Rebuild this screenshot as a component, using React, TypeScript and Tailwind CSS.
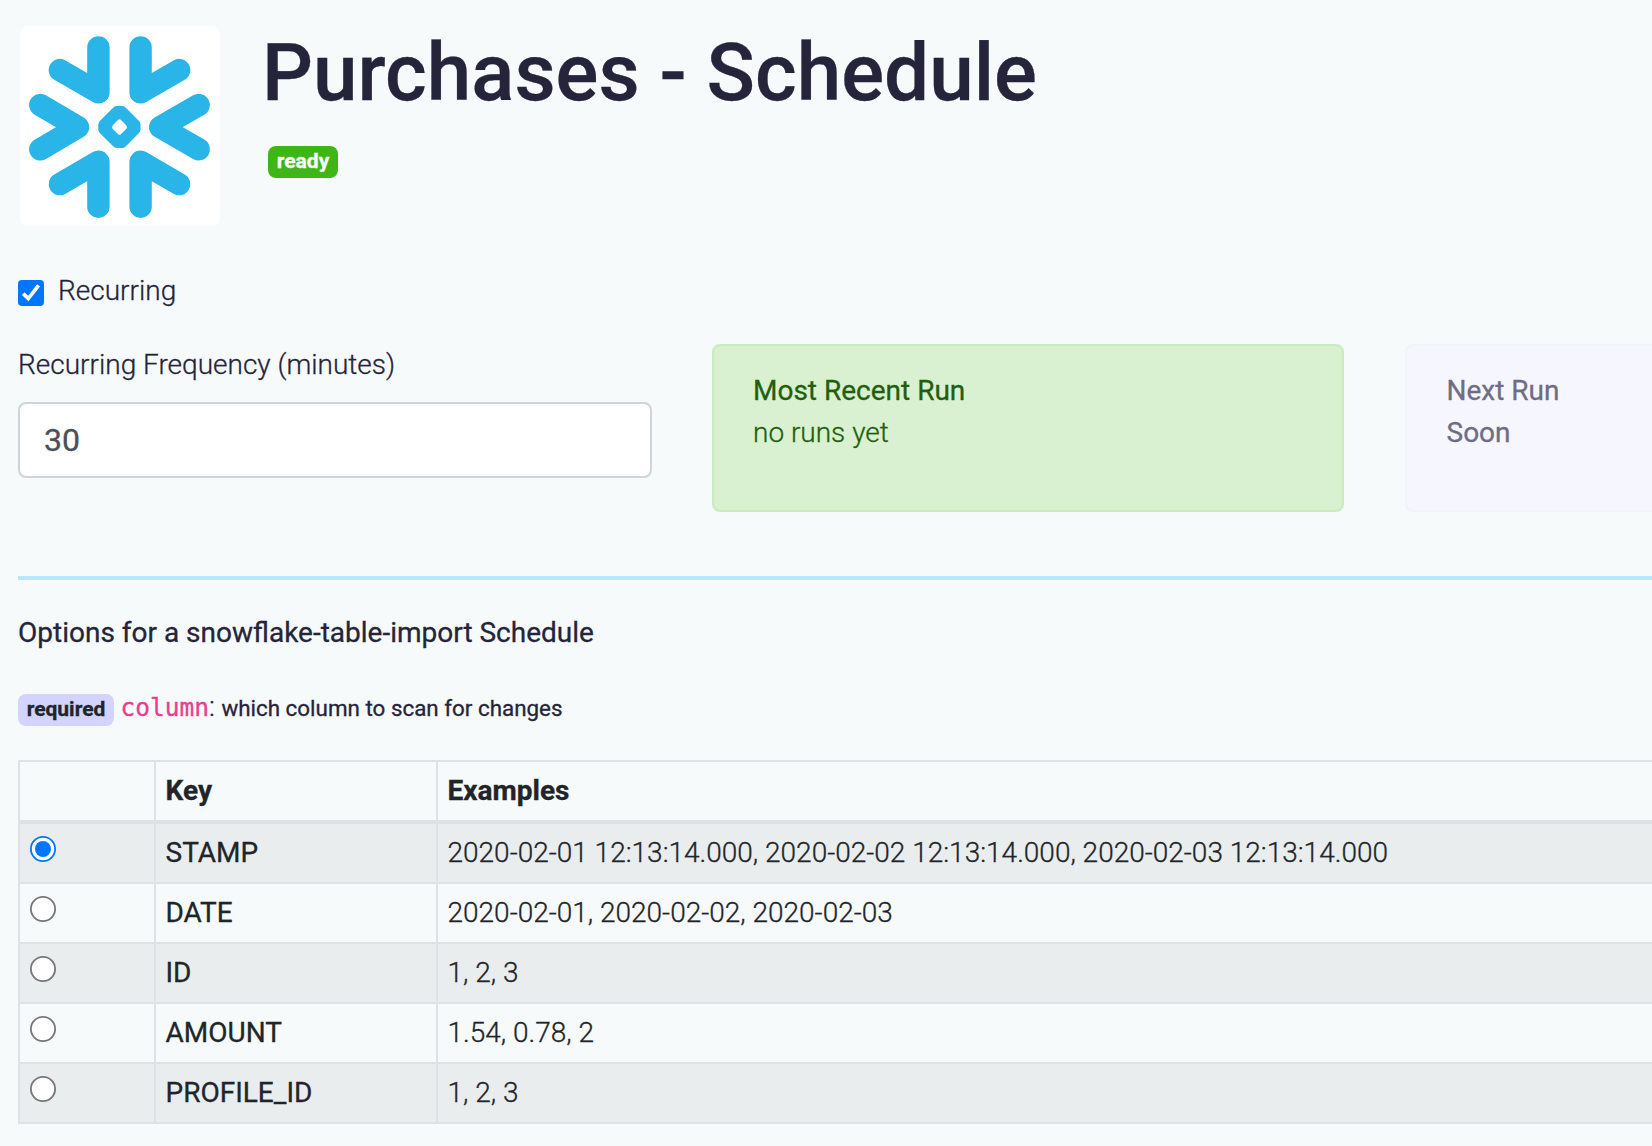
type Row = { key: string; examples: string };

const rows: Row[] = [
  { key: "STAMP", examples: "2020-02-01 12:13:14.000, 2020-02-02 12:13:14.000, 2020-02-03 12:13:14.000" },
  { key: "DATE", examples: "2020-02-01, 2020-02-02, 2020-02-03" },
  { key: "ID", examples: "1, 2, 3" },
  { key: "AMOUNT", examples: "1.54, 0.78, 2" },
  { key: "PROFILE_ID", examples: "1, 2, 3" },
];

function SnowflakeLogo() {
  return (
    <svg viewBox="20 26 200 200" className="size-[200px] shrink-0 rounded-lg bg-white">
      <g fill="none" stroke="#29b5e8" strokeWidth="22.4" strokeLinecap="round" strokeLinejoin="round">
        <path d="M98.4 47.5V92.4L59.9 70.1" />
        <path d="M140.6 47.5V92.4L179.1 70.1" />
        <path d="M98.4 206.7V161.8L59.9 184.1" />
        <path d="M140.6 206.7V161.8L179.1 184.1" />
        <path d="M40.3 105L78 127.1L40.3 149.3" />
        <path d="M198.7 105L160.2 127.1L198.7 149.3" />
      </g>
      <path
        fill="#29b5e8"
        fillRule="evenodd"
        d="M116.2 106Q119.3 105.6 122.8 106Q124.6 106.4 125.6 107.4L139 120.9Q140.4 122.3 140.5 124.2V129.8Q140.4 131.7 139 133.1L125.6 146.6Q124.2 148 122.3 148.1H116.7Q114.8 148 113.4 146.6L99.8 133.1Q98.4 131.7 98.3 129.8V124.2Q98.4 122.3 99.8 120.9L113.4 107.4Q114.6 106.2 116.2 106ZM118.2 119.8L112.8 125.2Q111.2 127.1 112.8 129L118.2 134.3Q119.5 135.3 120.8 134.3L126.2 129Q127.8 127.1 126.2 125.2L120.8 119.8Q119.5 118.8 118.2 119.8Z"
      />
    </svg>
  );
}

function Checkbox() {
  return (
    <svg viewBox="0 0 26 26" className="mt-[10px] size-[26px] shrink-0" role="checkbox" aria-checked="true">
      <rect width="26" height="26" rx="4" fill="#0075ff" />
      <path d="M5.2 13.6L10.3 18.6L20.6 5.4" fill="none" stroke="#fff" strokeWidth="3.7" />
    </svg>
  );
}

function Radio({ checked }: { checked: boolean }) {
  return (
    <svg viewBox="0 0 26 26" className="size-[26px]" role="radio" aria-checked={checked}>
      <circle cx="13" cy="13" r="12.1" fill="#fff" stroke={checked ? "#0075ff" : "#767676"} strokeWidth="1.8" />
      {checked && <circle cx="13" cy="13" r="8" fill="#0075ff" />}
    </svg>
  );
}

export default function App() {
  return (
    <div className="h-[1146px] w-[1652px] overflow-hidden bg-[#f6fafb] pl-[18px] font-[Roboto,sans-serif] text-[28px] leading-[42px] font-light text-[#25243a] [-webkit-text-stroke:0.3px]">
      <header className="flex h-[270px] pt-[26px] pl-[2px]">
        <SnowflakeLogo />
        <div className="-mt-px ml-[42px]">
          <h1 className="text-[80px] leading-[96px] font-medium">Purchases - Schedule</h1>
          <span className="mt-[25px] ml-[6px] flex h-8 w-[70px] items-center justify-center rounded-lg bg-[#3fb618] pb-[2px] text-[21px] leading-[21px] font-bold text-white">
            ready
          </span>
        </div>
      </header>

      <div className="flex h-[74px] gap-[14px]">
        <Checkbox />
        <span>Recurring</span>
      </div>

      <section className="flex h-[232px] w-[2019px]">
        <div className="w-[634px]">
          <label className="block">Recurring Frequency (minutes)</label>
          <div className="mt-4 flex h-[76px] items-center rounded-lg border-2 border-[#ced4da] bg-white px-6 text-[32px] font-normal text-[#495057]">
            30
          </div>
        </div>
        <div className="ml-[60px] h-[168px] w-[632px] rounded-lg border-2 border-[#c9ebbe] bg-[#d9f0d1] px-[39px] py-6 text-[#215f0c]">
          <p className="font-normal">Most Recent Run</p>
          <p>no runs yet</p>
        </div>
        <div className="ml-[60.5px] h-[168px] w-[632px] rounded-lg border-2 border-[#f3f3ff] bg-[#f6f6ff] px-[40px] py-6 font-normal text-[#6e6d85]">
          <p>Next Run</p>
          <p>Soon</p>
        </div>
      </section>

      <hr className="h-1 border-0 bg-[#b3e8ff]" />

      <h2 className="mt-[32px] font-normal">Options for a snowflake-table-import Schedule</h2>

      <div className="mt-[32px] flex h-[42px] items-baseline">
        <span className="flex h-8 w-24 items-center justify-center rounded-lg bg-[#d3d3ff] text-[21px] leading-[21px] font-bold text-[#212529]">
          required
        </span>
        <code className="ml-[6.5px] font-['DejaVu_Sans_Mono',monospace] text-[24.5px] font-normal text-[#e83e8c]">column</code>
        <span>:</span>
        <span className="ml-[6.5px] text-[22.4px] font-normal">which column to scan for changes</span>
      </div>

      <table className="mt-[32px] w-[2000px] table-fixed border-separate border-spacing-0 border-t-2 border-l-2 border-[#dee2e6] text-left text-[#212529]">
        <colgroup>
          <col className="w-[136px]" />
          <col className="w-[282px]" />
          <col />
        </colgroup>
        <thead>
          <tr className="h-[62px] font-bold">
            <th className="border-r-2 border-b-4 border-[#dee2e6] p-0" />
            <th className="border-r-2 border-b-4 border-[#dee2e6] px-[9.5px] py-0">Key</th>
            <th className="border-r-2 border-b-4 border-[#dee2e6] px-[9.5px] py-0">Examples</th>
          </tr>
        </thead>
        <tbody>
          {rows.map((row, i) => (
            <tr key={row.key} className="h-[60px] odd:bg-[#e9edee]">
              <td className="border-r-2 border-b-2 border-[#dee2e6] px-[10px] pt-0 pb-2 align-middle">
                <Radio checked={i === 0} />
              </td>
              <td className="border-r-2 border-b-2 border-[#dee2e6] px-[9.5px] py-0 font-normal">{row.key}</td>
              <td className="border-r-2 border-b-2 border-[#dee2e6] px-[9.5px] py-0">{row.examples}</td>
            </tr>
          ))}
        </tbody>
      </table>
    </div>
  );
}
